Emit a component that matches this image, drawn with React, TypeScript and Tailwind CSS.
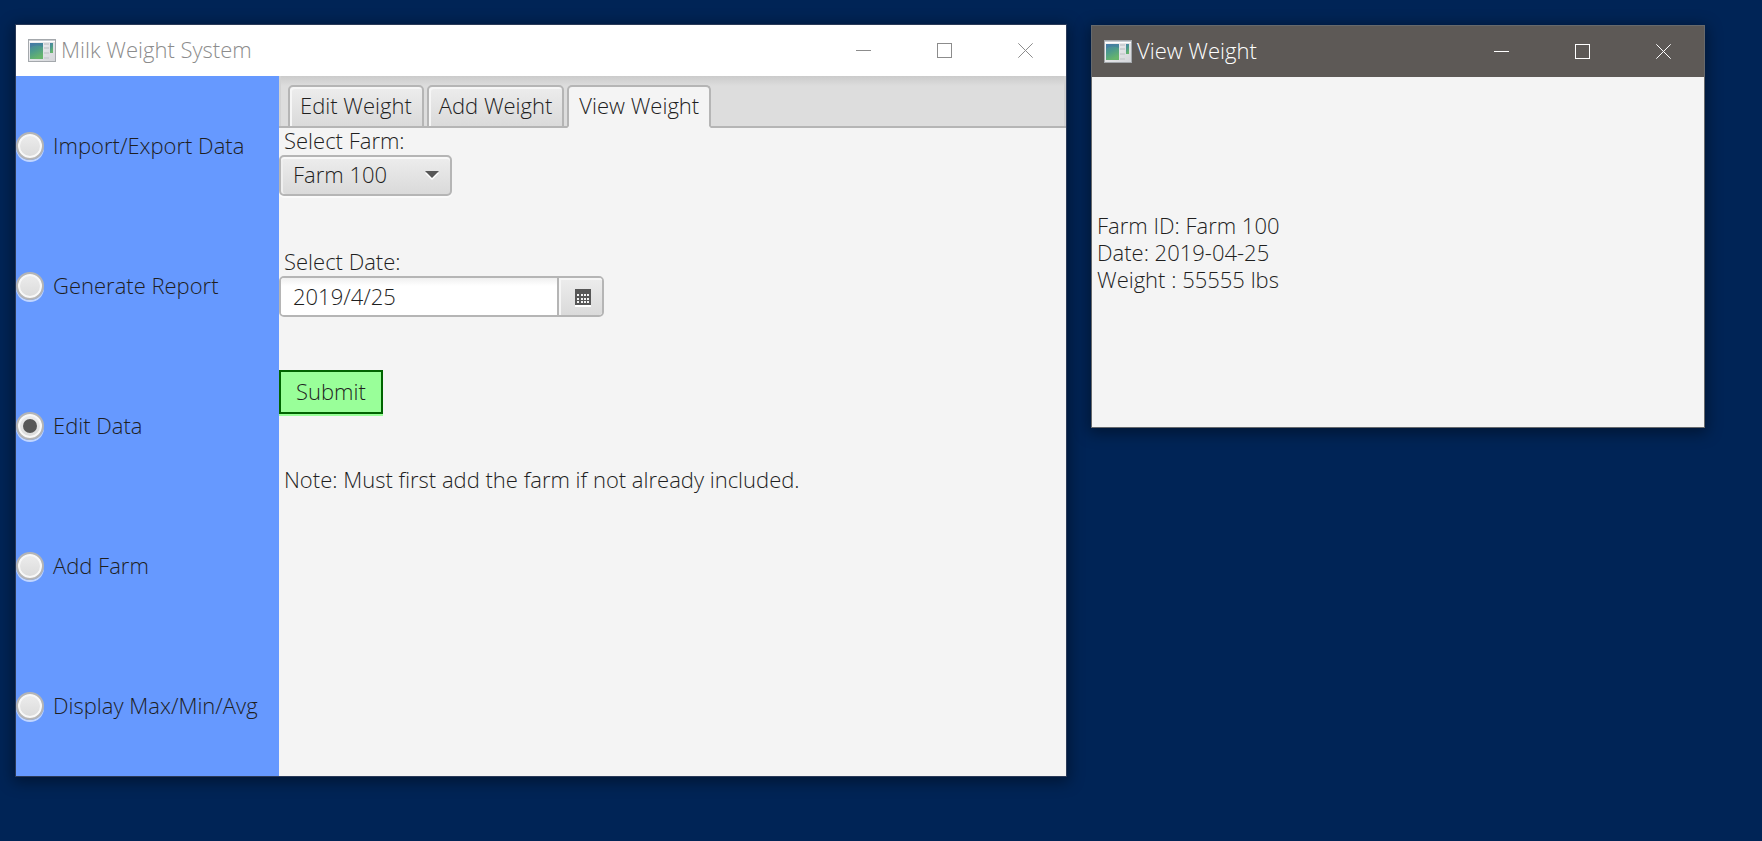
import { useState, type ReactNode } from 'react';
import clsx from 'clsx';

const FACE = 'bg-linear-to-b from-[#ededed] to-[#dadada]';

const MENU = ['Import/Export Data', 'Generate Report', 'Edit Data', 'Add Farm', 'Display Max/Min/Avg'];
const TABS = ['Edit Weight', 'Add Weight', 'View Weight'];

function AppIcon() {
  return (
    <svg width="28" height="24" viewBox="0 0 28 24" aria-hidden="true">
      <defs>
        <linearGradient id="pane" x1="0" y1="0" x2="0.4" y2="1">
          <stop offset="0" stopColor="#4a7fa8" />
          <stop offset="0.5" stopColor="#4c9a8c" />
          <stop offset="1" stopColor="#67b56c" />
        </linearGradient>
        <linearGradient id="frame" x1="0" y1="0" x2="1" y2="1">
          <stop offset="0" stopColor="#f4f4f6" />
          <stop offset="1" stopColor="#d3d5d9" />
        </linearGradient>
      </defs>
      <rect x="0.5" y="0.5" width="27" height="22" fill="url(#frame)" stroke="#a4a8ac" />
      <path d="M1 1.5h26" stroke="#c9cdd2" />
      <path d="M1 2.5h26" stroke="#ffffff" />
      <rect x="2" y="4" width="13" height="16" fill="url(#pane)" />
      <path d="M2 9C5 6 10 6 15 8V4H2z" fill="#3f74a6" opacity="0.45" />
      <path d="M16 5h5M16 9h5M16 14h5M16 19h5" stroke="#cdd0d3" strokeWidth="2" />
      <rect x="22" y="4" width="3" height="10" fill="url(#pane)" />
    </svg>
  );
}

function WindowButtons() {
  const base = 'flex w-[81px] items-center justify-center';
  const svg = { width: 15, height: 15, viewBox: '0 0 15 15', fill: 'none', stroke: 'currentColor' };
  return (
    <div className="flex self-stretch">
      <button type="button" aria-label="Minimize" className={base}>
        <svg {...svg}><path d="M0 7.5h15" /></svg>
      </button>
      <button type="button" aria-label="Maximize" className={base}>
        <svg {...svg}><rect x="0.5" y="0.5" width="14" height="14" /></svg>
      </button>
      <button type="button" aria-label="Close" className={base}>
        <svg {...svg}><path d="M0.3 0.3l14.4 14.4M14.7 0.3L0.3 14.7" /></svg>
      </button>
    </div>
  );
}

function AppWindow({ title, active, children }: { title: string; active?: boolean; children: ReactNode }) {
  return (
    <section
      className={clsx(
        'flex min-w-0 flex-col border bg-[#f4f4f4] shadow-[0_3px_14px_2px_rgba(0,0,0,0.4)]',
        active ? 'mt-px border-[#66696c]' : 'border-[#2a3a58]',
      )}
    >
      <header
        className={clsx(
          'flex h-[51px] shrink-0 items-center pl-3',
          active ? 'bg-[#5d5956] text-white' : 'bg-white text-[#8c8c8c]',
        )}
      >
        <AppIcon />
        <h1 className="min-w-0 flex-1 pb-[3px] pl-[5px] leading-[30px] whitespace-nowrap">{title}</h1>
        <WindowButtons />
      </header>
      {children}
    </section>
  );
}

function Sidebar() {
  const [choice, setChoice] = useState('Edit Data');
  return (
    <nav className="flex w-[263px] shrink-0 flex-col bg-[#6699ff]" aria-label="Actions">
      {MENU.map((item) => (
        <label key={item} className="flex h-35 items-center gap-[9px] whitespace-nowrap">
          <span className="grid size-7 shrink-0 place-items-center">
            <input
              type="radio"
              name="action"
              checked={choice === item}
              onChange={() => setChoice(item)}
              className={clsx(
                'col-start-1 row-start-1 size-7 appearance-none rounded-full border-2 border-[#b5b5b5] shadow-[0_2px_0_rgba(255,255,255,0.6),inset_0_0_0_2px_#f8f8f8]',
                FACE,
              )}
            />
            {choice === item && (
              <span className="pointer-events-none col-start-1 row-start-1 size-3.5 rounded-full bg-[#575757]" />
            )}
          </span>
          <span className="pb-0.5">{item}</span>
        </label>
      ))}
    </nav>
  );
}

function TabBar({ current, onSelect }: { current: string; onSelect: (tab: string) => void }) {
  return (
    <div
      role="tablist"
      className="flex h-13 items-end gap-[3px] bg-[linear-gradient(to_bottom,#cbcbcb,#dddddd_10px)] pl-[9px] shadow-[inset_0_-2px_0_#b5b5b5,inset_2px_0_0_#d2d2d2,inset_-2px_0_0_#d2d2d2]"
    >
      {TABS.map((tab) => (
        <button
          key={tab}
          type="button"
          role="tab"
          aria-selected={tab === current}
          onClick={() => onSelect(tab)}
          className={clsx(
            'h-[43px] rounded-t-[5px] border-2 border-[#b5b5b5] px-2.5 pb-0.5 leading-[37px] whitespace-nowrap',
            tab === current
              ? 'border-b-[#f4f4f4] bg-[#f4f4f4]'
              : ['shadow-[inset_2px_2px_0_#f6f6f6]', FACE],
          )}
        >
          {tab}
        </button>
      ))}
    </div>
  );
}

function CalendarIcon() {
  return (
    <svg width="16" height="18" viewBox="0 0 16 18" shapeRendering="crispEdges" aria-hidden="true">
      <path d="M0 2h16v16H0z" fill="#ffffff" />
      <path d="M0 0h16v16H0z" fill="#575757" />
      {[6, 10, 13].map((y) => (
        <path key={y} d={`M2 ${y}h2M6 ${y}h2M9 ${y}h2M12 ${y}h2`} stroke="#f4f4f4" strokeWidth="2" />
      ))}
    </svg>
  );
}

function WeightForm() {
  const [date, setDate] = useState('2019/4/25');
  return (
    <form className="flex flex-col items-start gap-[53px]" onSubmit={(e) => e.preventDefault()}>
      <div>
        <label htmlFor="farm" className="mb-[3px] block pl-[5px] leading-6">Select Farm:</label>
        <div className="grid w-[173px] items-center">
          <select
            id="farm"
            className={clsx(
              'col-start-1 row-start-1 h-[41px] appearance-none rounded-[5px] border-2 border-[#b5b5b5] pb-1 pl-3 shadow-[inset_0_2px_0_#f8f8f8,inset_2px_0_0_#efefef,0_2px_0_#fafafa]',
              FACE,
            )}
          >
            <option>Farm 100</option>
          </select>
          <svg
            width="14" height="9" viewBox="0 0 14 9" aria-hidden="true"
            className="pointer-events-none col-start-1 row-start-1 mr-[13px] justify-self-end"
          >
            <path d="M0 2h14L7 9z" fill="#ffffff" />
            <path d="M0 0h14L7 7z" fill="#575757" />
          </svg>
        </div>
      </div>

      <div>
        <label htmlFor="date" className="mb-[3px] block pl-[5px] leading-6">Select Date:</label>
        <div className="flex h-[41px] w-[325px] overflow-hidden rounded-[5px] border-2 border-[#b5b5b5] bg-white">
          <input
            id="date"
            type="text"
            value={date}
            onChange={(e) => setDate(e.target.value)}
            className="min-w-0 flex-1 bg-[linear-gradient(to_bottom,#f0f0f0,#ffffff_8px)] pb-0.5 pl-3 outline-none"
          />
          <button
            type="button"
            aria-label="Open calendar"
            className={clsx(
              'flex w-[45px] items-center justify-center border-l-2 border-[#b5b5b5] pt-0.5 pl-1 shadow-[inset_2px_2px_0_#f6f6f6]',
              FACE,
            )}
          >
            <CalendarIcon />
          </button>
        </div>
      </div>

      <button
        type="submit"
        className="h-11 border-2 border-[#006400] bg-[#99ff99] px-[15px] pb-0.5 shadow-[0_2px_0_#99ff99]"
      >
        Submit
      </button>

      <p className="pl-[5px] leading-6">Note: Must first add the farm if not already included.</p>
    </form>
  );
}

export default function App() {
  const [tab, setTab] = useState('View Weight');
  return (
    <main className="grid min-h-screen grid-cols-[1052fr_614fr] items-start gap-6 bg-[#002456] pt-6 pr-[57px] pb-6 pl-[15px] font-['Open_Sans',sans-serif] text-[22px] leading-[26px] font-light text-[#1f1f1f]">
      <AppWindow title="Milk Weight System">
        <div className="flex">
          <Sidebar />
          <div className="min-w-0 flex-1">
            <TabBar current={tab} onSelect={setTab} />
            <div role="tabpanel" aria-label={tab}>
              <WeightForm />
            </div>
          </div>
        </div>
      </AppWindow>

      <AppWindow title="View Weight" active>
        <div className="flex min-h-[350px] flex-col justify-center pl-[5px] leading-[27px]">
          <p>Farm ID: Farm 100</p>
          <p>Date: 2019-04-25</p>
          <p>Weight : 55555 lbs</p>
        </div>
      </AppWindow>
    </main>
  );
}
